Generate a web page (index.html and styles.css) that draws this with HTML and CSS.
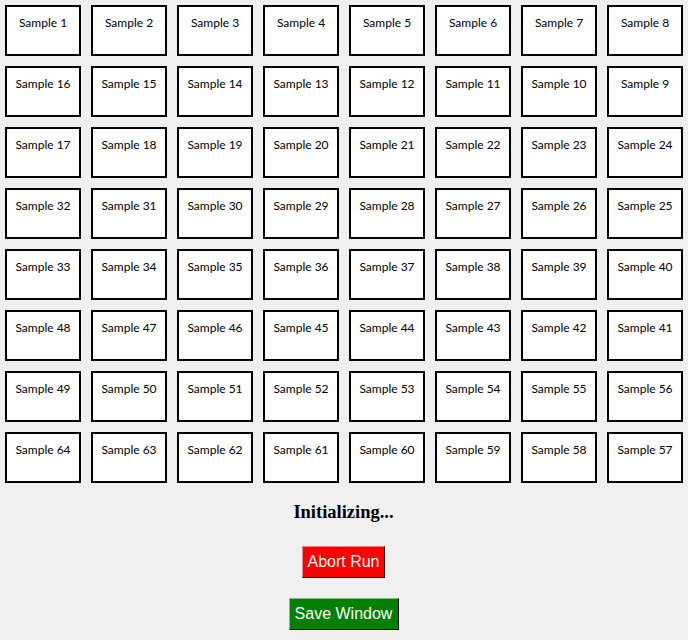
FILE: index.html
```html
<!DOCTYPE html>
<html>
<head>
<meta charset="utf-8">
<link rel="stylesheet" href="styles.css">
</head>
<body>
<div class="grid">
<div class="cell">Sample 1</div><div class="cell">Sample 2</div><div class="cell">Sample 3</div><div class="cell">Sample 4</div><div class="cell">Sample 5</div><div class="cell">Sample 6</div><div class="cell">Sample 7</div><div class="cell">Sample 8</div>
<div class="cell">Sample 16</div><div class="cell">Sample 15</div><div class="cell">Sample 14</div><div class="cell">Sample 13</div><div class="cell">Sample 12</div><div class="cell">Sample 11</div><div class="cell">Sample 10</div><div class="cell">Sample 9</div>
<div class="cell">Sample 17</div><div class="cell">Sample 18</div><div class="cell">Sample 19</div><div class="cell">Sample 20</div><div class="cell">Sample 21</div><div class="cell">Sample 22</div><div class="cell">Sample 23</div><div class="cell">Sample 24</div>
<div class="cell">Sample 32</div><div class="cell">Sample 31</div><div class="cell">Sample 30</div><div class="cell">Sample 29</div><div class="cell">Sample 28</div><div class="cell">Sample 27</div><div class="cell">Sample 26</div><div class="cell">Sample 25</div>
<div class="cell">Sample 33</div><div class="cell">Sample 34</div><div class="cell">Sample 35</div><div class="cell">Sample 36</div><div class="cell">Sample 37</div><div class="cell">Sample 38</div><div class="cell">Sample 39</div><div class="cell">Sample 40</div>
<div class="cell">Sample 48</div><div class="cell">Sample 47</div><div class="cell">Sample 46</div><div class="cell">Sample 45</div><div class="cell">Sample 44</div><div class="cell">Sample 43</div><div class="cell">Sample 42</div><div class="cell">Sample 41</div>
<div class="cell">Sample 49</div><div class="cell">Sample 50</div><div class="cell">Sample 51</div><div class="cell">Sample 52</div><div class="cell">Sample 53</div><div class="cell">Sample 54</div><div class="cell">Sample 55</div><div class="cell">Sample 56</div>
<div class="cell">Sample 64</div><div class="cell">Sample 63</div><div class="cell">Sample 62</div><div class="cell">Sample 61</div><div class="cell">Sample 60</div><div class="cell">Sample 59</div><div class="cell">Sample 58</div><div class="cell">Sample 57</div>
</div>
<div class="controls">
<div class="status">Initializing...</div>
<button class="btn btn-abort">Abort Run</button>
<button class="btn btn-save">Save Window</button>
</div>
</body>
</html>
```
FILE: styles.css
```css
html, body {
  margin: 0;
  padding: 0;
  background: #f0f0f0;
}
body {
  padding: 5px;
}
.grid {
  display: grid;
  grid-template-columns: repeat(8, 76px);
  grid-auto-rows: 51px;
  gap: 10px;
}
.cell {
  box-sizing: border-box;
  border: 2px solid #000;
  background: #fff;
  font-family: Lato, "Noto Sans", sans-serif;
  font-size: 12px;
  line-height: 16px;
  color: #000;
  text-align: center;
  padding-top: 8px;
}
.controls {
  display: flex;
  flex-direction: column;
  align-items: center;
  padding-top: 18px;
  padding-right: 1px;
}
.status {
  font-family: "Liberation Serif", serif;
  font-weight: bold;
  font-size: 18.5px;
  line-height: 22px;
  color: #000;
}
.btn {
  box-sizing: border-box;
  height: 32px;
  padding: 0;
  white-space: nowrap;
  font-family: "Liberation Sans", sans-serif;
  font-size: 16px;
  line-height: 30px;
  color: #fff;
  border: 1px solid;
  border-radius: 0;
}
.btn-abort {
  margin-top: 23px;
  width: 83px;
  background: #ff0000;
  border-color: #ff8080 #000 #000 #ff8080;
}
.btn-save {
  margin-top: 20px;
  width: 110px;
  background: #008000;
  border-color: #80c080 #000 #000 #80c080;
}
```
